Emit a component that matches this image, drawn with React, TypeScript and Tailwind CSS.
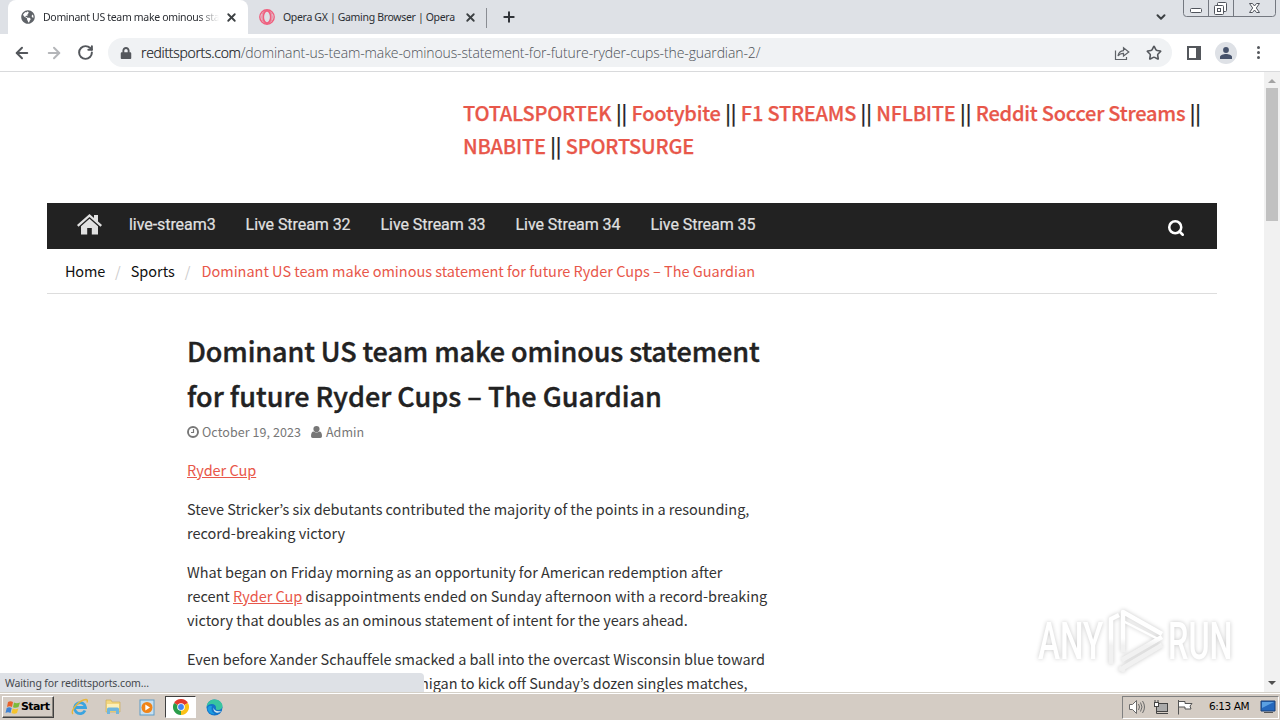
import React from "react";
import {
  ArrowLeft,
  ArrowRight,
  ChevronDown,
  Plus,
  RotateCw,
  Search,
  Star,
  X,
} from "lucide-react";
import { FaLock, FaGlobeAmericas } from "react-icons/fa";

const headerLinks = [
  "TOTALSPORTEK",
  "Footybite",
  "F1 STREAMS",
  "NFLBITE",
  "Reddit Soccer Streams",
  "NBABITE",
];

const menu = [
  "live-stream3",
  "Live Stream 32",
  "Live Stream 33",
  "Live Stream 34",
  "Live Stream 35",
];

function TabStrip() {
  return (
    <div className="relative flex h-[34px] w-full bg-[#dee1e6] text-[10.5px] text-[#2b2e33] font-['Noto_Sans',sans-serif]">
      {/* Active tab */}
      <div className="ml-2 flex h-full w-[240px] items-center rounded-t-lg bg-white pl-[13px]">
        <FaGlobeAmericas className="size-[14px] shrink-0 text-[#5f6368]" />
        <span className="ml-2 w-[176px] pt-px whitespace-nowrap tracking-[-0.32px] [mask-image:linear-gradient(to_right,black_155px,transparent)]">
          Dominant US team make ominous sta
        </span>
        <X className="ml-[6px] size-[13px] shrink-0 text-[#3c4043]" strokeWidth={3.4} />
      </div>

      {/* Second tab */}
      <div className="flex h-full w-[238px] items-center pl-[11px]">
        <svg className="size-4 shrink-0" viewBox="0 0 16 16" fill="none" stroke="#ef5f7e">
          <circle cx="8" cy="8" r="7.2" strokeWidth="1.4" />
          <ellipse cx="8" cy="8" rx="3.7" ry="6" strokeWidth="1.6" />
          <ellipse cx="8" cy="8" rx="5.2" ry="6.6" strokeWidth=".8" />
        </svg>
        <span className="ml-2 w-[181px] pt-px whitespace-nowrap tracking-[-0.33px]">
          Opera GX | Gaming Browser | Opera
        </span>
        <X className="size-[13px] shrink-0 text-[#3c4043]" strokeWidth={3.4} />
      </div>
      <div className="mt-2 h-5 w-px bg-[#8a8d93]" />
      <Plus className="mt-[9px] ml-[14px] size-4 text-[#303338]" strokeWidth={3} />
      <ChevronDown className="mt-[10px] mr-[15px] ml-auto size-[14px] text-[#3c4043]" strokeWidth={3.4} />

      {/* Window buttons */}
      <svg className="mr-[4px] h-[18px] w-[93px]" viewBox="0 0 93 18" fill="none" stroke="#747880">
        <path d="M.5 0V13.500q0 3 3 3H89.500q3 0 3-3V0M25.500 0V16.500M50.500 0V16.500" />
        <rect x="7.500" y="8.500" width="11" height="4" rx="1" fill="#fff" stroke="#50545c" />
        <g fill="#fff" stroke="#50545c">
          <rect x="34.500" y="2.500" width="9" height="9" rx="1" />
          <rect x="31.500" y="5.500" width="9" height="9" rx="1" />
          <rect x="34.500" y="8.500" width="3" height="3" />
        </g>
        <path d="M66.500 3.500h3l2 2.500 2-2.500h3l-3.200 4.500 3.200 4.500h-3l-2-2.500-2 2.500h-3l3.200-4.500z" fill="#fff" stroke="#50545c" />
      </svg>
    </div>
  );
}

function Toolbar() {
  return (
    <div className="flex h-[38px] items-center border-b border-[#d9dadc] bg-white pl-[13px] text-[#54575c]">
      <ArrowLeft className="size-[18px]" strokeWidth={2.6} />
      <ArrowRight className="ml-[14px] size-[18px] text-[#b4b6b9]" strokeWidth={2.6} />
      <RotateCw className="ml-[14px] size-[17px]" strokeWidth={2.8} />
      <div className="ml-[14px] flex h-[29px] w-[1064px] items-center rounded-full bg-[#f0f2f4] pl-[12px]">
        <FaLock className="size-3 text-[#54575c]" />
        <span className="ml-[9px] font-['Open_Sans',sans-serif] text-[14px] font-light whitespace-nowrap tracking-[-0.11px] text-[#4d5157]">
          <span className="tracking-[-0.29px] text-[#17191c] [-webkit-text-stroke:0.2px_#17191c]">
            redittsports.com
          </span>
          /dominant-us-team-make-ominous-statement-for-future-ryder-cups-the-guardian-2/
        </span>
        <svg className="ml-auto size-4" viewBox="0 0 16 16" fill="none" stroke="#5f6368" strokeWidth="1.2">
          <path d="M1.500 5.500V14.500H12.500V12" />
          <path d="M4 11C4.500 7.500 6.500 6 9.500 5.700V2.800L14.800 7 9.500 11V8.300C7 8.300 5.400 9 4 11Z" />
        </svg>
        <Star className="ml-4 mr-[10px] size-4" strokeWidth={2.4} />
      </div>
      <svg className="ml-[15px] h-[14px] w-[14px]" viewBox="0 0 14 14">
        <rect x="1" y="1" width="12" height="12" fill="none" stroke="#54575c" strokeWidth="2" />
        <rect x="9" width="5" height="14" fill="#54575c" />
      </svg>
      <div className="ml-[14px] flex size-[22px] items-center justify-center rounded-full bg-[#dee1e6]">
        <svg className="size-3" viewBox="0 0 12 12" fill="#46526b">
          <circle cx="6" cy="3" r="2.900" />
          <path d="M0 12V10C0 8 3.500 7 6 7s6 1 6 3v2z" />
        </svg>
      </div>
      <div className="ml-[20px] flex flex-col gap-[2px]">
        <span className="size-[3px] rounded-full bg-[#54575c]" />
        <span className="size-[3px] rounded-full bg-[#54575c]" />
        <span className="size-[3px] rounded-full bg-[#54575c]" />
      </div>
    </div>
  );
}

function SiteHeader() {
  return (
    <header className="w-[1170px]">
      <div className="ml-[416px] h-[131px] w-[750px] pt-[24px] text-[20px] leading-[33px] font-medium tracking-[-0.22px] text-[#e8574a] [-webkit-text-stroke:0.25px]">
        {headerLinks.map((link) => (
          <React.Fragment key={link}>
            <a>{link}</a>
            <span className="tracking-[-0.03px] text-[#222]"> || </span>
          </React.Fragment>
        ))}
        <a>SPORTSURGE</a>
      </div>

      {/* Nav */}
      <nav className="flex h-[46px] items-center bg-[#222] pl-[30px] font-['Roboto',sans-serif] text-[16px] tracking-[-0.06px] text-[#e1e1e1]">
        <svg className="mr-[27px] -mt-[3px] h-[21px] w-[25px]" viewBox="0 0 25 21" fill="#e1e1e1">
          <path d="M12.500 0 17 4V1h4v6.500l4 3.500-1.500 1.700L12.500 3 1.500 12.700 0 11z" />
          <path d="M12.500 4.800 21 12.300V20.500H14.800V14H10.200v6.500H4V12.300z" />
        </svg>
        {menu.map((item) => (
          <a key={item} className="-mt-[2px] mr-[30px] whitespace-nowrap [-webkit-text-stroke:0.2px]">
            {item}
          </a>
        ))}
        <Search className="mt-[3px] mr-[32px] ml-auto size-[18px] text-white" strokeWidth={3.4} />
      </nav>

      {/* Breadcrumb */}
      <div className="flex h-[45px] items-center border-b border-[#ddd] pl-[18px] text-[14.5px] tracking-[-0.01px] text-[#111]">
        <a className="tracking-[-0.2px]">Home</a>
        <span className="mx-[10px] text-[#ccc]">/</span>
        <a>Sports</a>
        <span className="mr-[11px] ml-[10px] text-[#ccc]">/</span>
        <span className="whitespace-nowrap text-[#e8574a]">
          Dominant US team make ominous statement for future Ryder Cups – The Guardian
        </span>
      </div>
    </header>
  );
}

function Article() {
  return (
    <article className="ml-[140px] w-[620px] pt-[34px] text-[14.5px] leading-6 tracking-[-0.03px] whitespace-nowrap text-[#333]">
      <h1 className="text-[27px] leading-[45px] font-medium text-[#222] [-webkit-text-stroke:0.4px]">
        <span className="tracking-[-0.1px]">Dominant US team make ominous statement</span>
        <br />
        <span className="tracking-[0.02px]">for future Ryder Cups – The Guardian</span>
      </h1>
      <div className="mt-[2px] flex h-6 items-center text-[12.5px] tracking-[0.07px] text-[#777]">
        <svg className="size-3" viewBox="0 0 12 12" fill="none" stroke="#777">
          <circle cx="6" cy="6" r="5" strokeWidth="1.900" />
          <path d="M6.500 3V6.500H4" strokeWidth="1.200" />
        </svg>
        <span className="ml-[3px]">October 19, 2023</span>
        <svg className="ml-[10px] h-3 w-[11px]" viewBox="0 0 11 12" fill="#777">
          <circle cx="5.500" cy="3.100" r="3.100" />
          <path d="M0 10.200Q0 5.500 2.700 5.500 5.500 7.500 8.300 5.500 11 5.500 11 10.200 11 12 9.300 12H1.700Q0 12 0 10.200z" />
        </svg>
        <span className="ml-1">Admin</span>
      </div>
      <p className="mt-[14px]">
        <a className="text-[#e8574a] underline">Ryder Cup</a>
      </p>
      <p className="mt-[15px]">
        Steve Stricker’s six debutants contributed the majority of the points in a resounding,
        <br />
        <span className="tracking-[0.01px]">record-breaking victory</span>
      </p>
      <p className="mt-[15px]">
        What began on Friday morning as an opportunity for American redemption after
        <br />
        <span className="tracking-[-0.02px]">
          recent <a className="text-[#e8574a] underline">Ryder Cup</a> disappointments ended on
          Sunday afternoon with a record-breaking
        </span>
        <br />
        <span className="tracking-[-0.05px]">
          victory that doubles as an ominous statement of intent for the years ahead.
        </span>
      </p>
      <p className="mt-[15px]">
        Even before Xander Schauffele smacked a ball into the overcast Wisconsin blue toward
        <br />
        <span className="ml-[233px] tracking-[-0.07px]">
          nigan to kick off Sunday’s dozen singles matches,
        </span>
      </p>
    </article>
  );
}

function Scrollbar() {
  return (
    <div className="flex w-4 flex-col items-center bg-[#f1f1f1]">
      <svg className="h-4 w-4 shrink-0" viewBox="0 0 16 16">
        <path d="M4 11 8 7l4 4z" fill="#a3a3a3" />
      </svg>
      <div className="h-[133px] w-3 bg-[#c1c1c1]" />
      <svg className="mt-auto h-[17px] w-4" viewBox="0 0 16 17">
        <path d="M4 6h8l-4 4z" fill="#505050" />
      </svg>
    </div>
  );
}

function Watermark() {
  return (
    <svg
      className="absolute top-[534px] left-[1030px] h-[72px] w-[210px] overflow-visible font-['Roboto',sans-serif] [filter:drop-shadow(0_0_2px_rgba(0,0,0,.22))]"
      viewBox="0 0 210 72"
    >
      <defs>
        <linearGradient id="fade" gradientUnits="userSpaceOnUse" x1="0" y1="0" x2="0" y2="72">
          <stop offset=".45" stopColor="#fff" />
          <stop offset=".55" stopColor="#f1f1f1" />
        </linearGradient>
      </defs>
      <g fill="url(#fade)" fontSize="51" fontWeight="500">
        <text transform="translate(8 53) scale(.65 1)">ANY</text>
        <text transform="translate(138 53) scale(.635 1)">RUN</text>
      </g>
      <g fill="none" stroke="url(#fade)" strokeWidth="4.500" strokeLinejoin="round">
        <path d="M89 9 81 13V58" />
        <path d="M93 46V6L132 28" />
        <path d="M93 15 130 34" strokeWidth="2.500" />
        <path d="M132 31 92 54M132 39 93 62V64L89 62" />
      </g>
    </svg>
  );
}

function Taskbar() {
  return (
    <footer className="relative flex h-7 items-center border-t border-[#d4d0c8] bg-[#d4ccc4] pt-px font-['DejaVu_Sans',sans-serif] text-[10.5px] text-black shadow-[inset_0_1px_0_#fff]">
      {/* Start button */}
      <div className="ml-[2px] flex h-[22px] w-[52px] items-center border border-t-white border-r-[#404040] border-b-[#404040] border-l-white pl-[2px] shadow-[inset_-1px_-1px_0_#8a857e]">
        <svg className="size-4 shrink-0" viewBox="0 0 16 16">
          <path d="M3 3Q5.500 1.500 8 3L7 8Q4.500 6.500 2 8z" fill="#e8622c" />
          <path d="M9 3.500Q11.500 5 15 3.500L13.500 8Q11 9.500 8 8.300z" fill="#7bbb3a" />
          <path d="M1.700 9Q4.200 7.500 6.700 9L5.500 14Q3 12.500.5 14z" fill="#3f83d4" />
          <path d="M7.700 9.500Q10.500 11 13.300 9.500L12 14Q9.500 15.500 6.500 14z" fill="#f5c32c" />
        </svg>
        <span className="text-[11px] font-bold tracking-[-0.6px]">Start</span>
      </div>

      {/* Internet Explorer */}
      <svg className="ml-[17px] size-[18px]" viewBox="0 0 18 18" fill="none">
        <path d="M14 12.500A5.500 5.500 0 1 1 14.500 9.500H5" stroke="#3ba4e0" strokeWidth="2.800" />
        <path d="M2 16C-1 13 8 2 15 1.500q2 0 1 3" stroke="#e8b63a" strokeWidth="1.400" />
      </svg>
      {/* Explorer */}
      <svg className="ml-[15px] size-[18px]" viewBox="0 0 18 18">
        <path d="M2 2h5l1 2h8v10H2z" fill="#f3d780" stroke="#c9a94f" strokeWidth=".6" />
        <path d="M3 6h12v6H3z" fill="#fdf0b8" />
        <path d="M3 16V11q0-1.500 1.500-1.500h9q1.500 0 1.500 1.500v5h-3v-3H6v3z" fill="#6fb6dd" />
      </svg>
      {/* Media player */}
      <svg className="ml-[17px] size-[17px]" viewBox="0 0 17 17">
        <rect x="1" y="1" width="14" height="15" fill="#c8e0f0" stroke="#5d9cc8" />
        <circle cx="8" cy="8.500" r="5.500" fill="#f08418" />
        <path d="M6.300 5.500 11 8.500l-4.700 3z" fill="#fff" />
      </svg>
      {/* Chrome */}
      <div className="ml-[9px] flex h-[22px] w-[31px] items-center justify-center border border-t-[#404040] border-r-white border-b-white border-l-[#404040] bg-white">
        <svg className="size-4" viewBox="0 0 16 16">
          <path d="M8 8 1.070 4A8 8 0 0 1 14.930 4z" fill="#e33b2e" />
          <path d="M8 8 14.930 4A8 8 0 0 1 8 16z" fill="#fbc116" />
          <path d="M8 8 8 16A8 8 0 0 1 1.070 4z" fill="#2a9d4a" />
          <circle cx="8" cy="8" r="3.800" fill="#fff" />
          <circle cx="8" cy="8" r="2.900" fill="#4285f4" />
        </svg>
      </div>
      {/* Edge */}
      <svg className="ml-[10px] size-[17px]" viewBox="0 0 17 17">
        <circle cx="8.500" cy="8.500" r="8" fill="#1473c8" />
        <path d="M.6 8C1 3 4.500.5 8.500.5c5 0 8 3.500 8 6.500 0 2.500-2 4-4.500 4-2 0-2.500-1-2-2C10 6 8 5 6 5 3.500 5 1.500 6 .6 8z" fill="#38c5a0" />
        <path d="M6 7Q4 12 9 15 3 16 1.500 10 2 6 6 7z" fill="#1b9de2" />
        <path d="M7.500 8.500Q8 13 15.500 12 13 14.500 10 13.500 7 12 7.500 8.500z" fill="#d4e8f0" />
      </svg>

      {/* Tray */}
      <div className="mr-px ml-auto flex h-[23px] w-[157px] items-center border border-t-[#808080] border-r-white border-b-white border-l-[#808080] pl-[6px]">
        <svg className="h-4 w-[66px]" viewBox="0 0 66 16" fill="#fff" stroke="#6a6a6a">
          <path d="M.5 5.500h3L7.500 1.500v13L3.500 10.500H.5z" />
          <path d="M9.500 5q2 3 0 6M11.500 3.500q3 4.500 0 9M13.500 2q4 6 0 12" fill="none" />
          <rect x="27.500" y="4.500" width="11" height="8" fill="#aaa" stroke="#444" />
          <path d="M30 14.500h9M26 1v3M29 1v3M27.500 7v7.500h3" fill="none" stroke="#444" />
          <rect x="25.500" y="3.500" width="4" height="4" stroke="#444" />
          <path d="M49.500 1v14.500M50 2.500h6v2h7L61 7l1 3H56V8h-6" stroke="#555" />
        </svg>
        <span className="ml-[14px] whitespace-nowrap tracking-[-0.45px]">6:13 AM</span>
        <svg className="ml-auto mr-[2px] h-[14px] w-4" viewBox="0 0 16 14">
          <path d="M1 1h14v10H1z" fill="#2568bd" stroke="#1b3f75" />
          <path d="M2 2h12L2 8z" fill="#5ba0e2" />
          <path d="M4 12.500h9" stroke="#555" />
        </svg>
      </div>
    </footer>
  );
}

export default function App() {
  return (
    <div className="flex h-[720px] w-[1280px] flex-col overflow-hidden bg-white">
      <TabStrip />
      <Toolbar />
      <main className="relative flex h-[620px] overflow-hidden font-['Noto_Sans_CJK_JP',sans-serif]">
        <div className="w-[1264px] pl-[47px]">
          <SiteHeader />
          <Article />
        </div>
        <Scrollbar />
        <Watermark />
        {/* Status bubble */}
        <div className="absolute bottom-0 left-0 flex h-[19px] w-[424px] items-center rounded-tr bg-[#dee1e6] pt-[2px] pl-[5px] font-['Noto_Sans',sans-serif] text-[10.5px] tracking-[-0.12px] text-[#45484d]">
          Waiting for redittsports.com...
        </div>
      </main>
      <Taskbar />
    </div>
  );
}
